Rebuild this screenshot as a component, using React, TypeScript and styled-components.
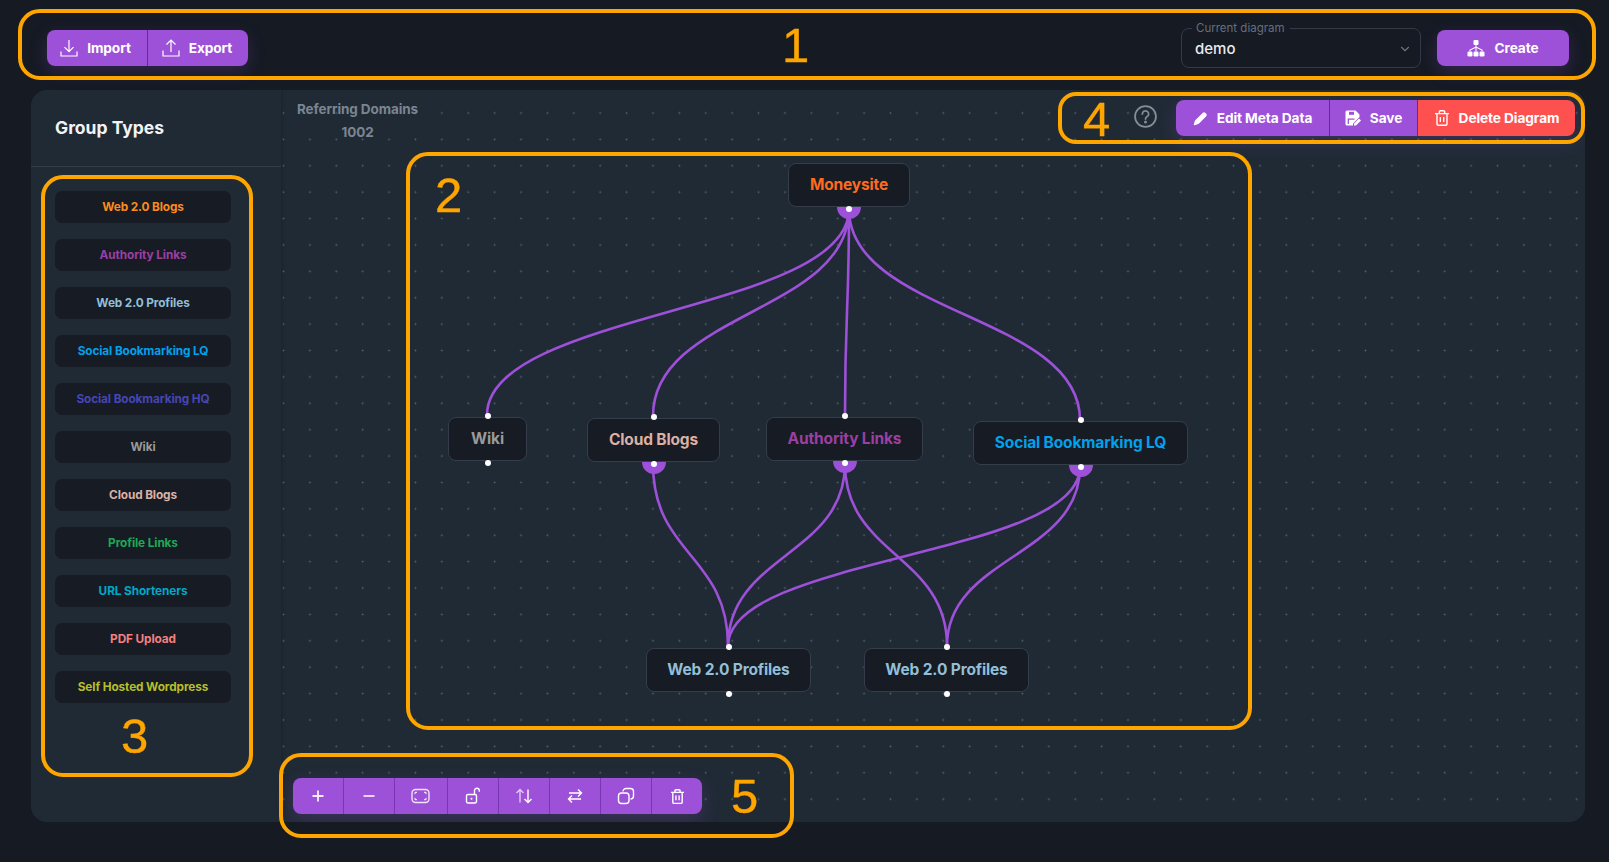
import React from 'react'
import styled, { createGlobalStyle } from 'styled-components'
import { ChevronDown } from 'lucide-react'

const PURPLE = '#9d50d8'
const CANVAS_X = 281
const CANVAS_Y = 90

const GlobalStyle = createGlobalStyle`
  html, body {
    margin: 0;
    padding: 0;
    background: #151a23;
    overflow: hidden;
  }
  * {
    box-sizing: border-box;
  }
`

const Page = styled.div`
  position: relative;
  width: 1609px;
  height: 862px;
  background: #151a23;
  font-family: Inter, "Noto Sans", sans-serif;
  overflow: hidden;
`

const Header = styled.header`
  display: flex;
  align-items: flex-start;
  height: 90px;
  padding: 21px 40px 0 47px;
`

const ButtonGroup = styled.div<{ $mt?: number }>`
  display: flex;
  height: 36px;
  margin-top: ${({ $mt }) => $mt ?? 0}px;
  border-radius: 8px;
  overflow: hidden;
  box-shadow: 0 6px 18px rgba(157, 80, 216, 0.22);
`

const GroupButton = styled.button<{ $w: number; $red?: boolean; $line?: string; $pr?: number }>`
  display: flex;
  align-items: center;
  justify-content: center;
  gap: 9px;
  width: ${({ $w }) => $w}px;
  height: 100%;
  padding: 0 ${({ $pr }) => $pr ?? 0}px 0 0;
  border: 0;
  border-right: 1px solid ${({ $line }) => $line ?? '#6c22ad'};
  background: ${({ $red }) => ($red ? '#ff5050' : PURPLE)};
  color: #fff;
  font-family: inherit;
  font-size: 13.7px;
  font-weight: 700;
  letter-spacing: -0.1px;

  &:last-child {
    border-right: 0;
  }
`

const Spacer = styled.div`
  flex: 1;
`

const SelectField = styled.fieldset`
  display: flex;
  align-items: center;
  justify-content: space-between;
  width: 240px;
  height: 47px;
  margin: 0 16px 0 0;
  padding: 0 8px 5px 13px;
  border: 1px solid #333b46;
  border-radius: 8px;
`

const SelectLabel = styled.legend`
  margin-left: -3px;
  padding: 0 5px 0 4px;
  color: #666f7b;
  font-size: 11.5px;
  font-weight: 400;
  line-height: 14px;
`

const SelectValue = styled.span`
  color: #e9ebee;
  font-size: 15px;
  font-weight: 500;
`

const Panel = styled.main`
  display: flex;
  width: 1554px;
  height: 732px;
  margin-left: 31px;
  background: #202a35;
  border-radius: 16px;
  overflow: hidden;
`

const Sidebar = styled.aside`
  position: relative;
  z-index: 1;
  width: 250px;
  flex-shrink: 0;
  background: #202a35;
  box-shadow: 1px 0 3px rgba(15, 20, 28, 0.35);
`

const SidebarTitle = styled.h2`
  display: flex;
  align-items: center;
  height: 77px;
  margin: 0;
  padding: 0 24px 1px;
  border-bottom: 1px solid #333d48;
  color: #f1f3f5;
  font-size: 17.5px;
  font-weight: 650;
`

const GroupList = styled.div`
  display: flex;
  flex-direction: column;
  gap: 16px;
  padding: 24px;
`

const GroupItem = styled.div<{ $color: string }>`
  display: flex;
  align-items: center;
  justify-content: center;
  width: 176px;
  height: 32px;
  background: #161b24;
  border-radius: 7px;
  color: ${({ $color }) => $color};
  font-size: 11.8px;
  font-weight: 700;
  letter-spacing: -0.1px;
`

const Canvas = styled.section`
  position: relative;
  flex: 1;
  background-color: #202a35;
  background-image: radial-gradient(circle at center, #57616c 0.8px, transparent 1.1px);
  background-size: 26.4px 26.4px;
  background-position: -10.7px 9.8px;
`

const Stats = styled.div`
  position: absolute;
  left: 16px;
  top: 11px;
  display: flex;
  flex-direction: column;
  align-items: center;
  gap: 6.5px;
  color: #7b8590;
  font-size: 13.5px;
  font-weight: 700;
  line-height: 16px;
  letter-spacing: -0.1px;
`

const HelpButton = styled.div`
  position: absolute;
  left: 853px;
  top: 15px;
  display: flex;
  color: #828d97;
`

const TopActions = styled.div`
  position: absolute;
  left: 895px;
  top: 10px;
  z-index: 2;
`

const BottomActions = styled.div`
  position: absolute;
  left: 12px;
  top: 688px;
  z-index: 2;
`

const EdgeLayer = styled.svg`
  position: absolute;
  left: 0;
  top: 0;
  width: 1269px;
  height: 732px;
`

const Node = styled.div<{ $x: number; $y: number; $w: number; $color: string }>`
  position: absolute;
  left: ${({ $x }) => $x - CANVAS_X}px;
  top: ${({ $y }) => $y - CANVAS_Y}px;
  width: ${({ $w }) => $w}px;
  height: 44px;
  display: flex;
  align-items: center;
  justify-content: center;
  padding-bottom: 1px;
  background: #161b24;
  border: 1.5px solid #343d49;
  border-radius: 8px;
  color: ${({ $color }) => $color};
  font-size: 15.5px;
  font-weight: 650;
  letter-spacing: -0.15px;
`

const Handle = styled.span<{ $side: 'top' | 'bottom' }>`
  position: absolute;
  left: 50%;
  ${({ $side }) => $side}: -5.5px;
  width: 6px;
  height: 6px;
  margin-left: -3px;
  background: #fff;
  border-radius: 50%;
  z-index: 2;
`

const Halo = styled.span`
  position: absolute;
  left: 50%;
  bottom: -13px;
  width: 24px;
  height: 12px;
  margin-left: -12px;
  background: ${PURPLE};
  border-radius: 0 0 12px 12px;
`

const AnnotationBox = styled.div<{ $x: number; $y: number; $w: number; $h: number; $r: number }>`
  position: absolute;
  left: ${({ $x }) => $x}px;
  top: ${({ $y }) => $y}px;
  width: ${({ $w }) => $w}px;
  height: ${({ $h }) => $h}px;
  border: 4.5px solid #ffa500;
  border-radius: ${({ $r }) => $r}px;
  pointer-events: none;
  z-index: 5;
`

const AnnotationNumber = styled.span<{ $x: number; $y: number }>`
  position: absolute;
  left: ${({ $x }) => $x}px;
  top: ${({ $y }) => $y}px;
  color: #ffa500;
  font-family: "Liberation Sans", Arial, sans-serif;
  font-size: 49px;
  line-height: 50px;
  -webkit-text-stroke: 0.4px #ffa500;
  pointer-events: none;
  z-index: 5;
`

function ImportIcon() {
  return (
    <svg width="18" height="18" viewBox="0 0 18 18" fill="none" stroke="#fff" strokeWidth="1.2">
      <path d="M1 12.5v4.5h16v-4.5M9 1v11.5M4.5 8.2 9 12.7l4.5-4.5" />
    </svg>
  )
}

function ExportIcon() {
  return (
    <svg width="18" height="18" viewBox="0 0 18 18" fill="none" stroke="#fff" strokeWidth="1.2">
      <path d="M1 11.5v5.5h16v-5.5M9 13V1M4.5 5.5 9 1l4.5 4.5" />
    </svg>
  )
}

function CreateIcon() {
  return (
    <svg width="18" height="17" viewBox="0 0 18 17" fill="#fff">
      <rect x="6.5" y="0" width="5" height="5" rx="1" />
      <rect x="0.5" y="11.5" width="5" height="5" rx="1.2" />
      <rect x="6.5" y="11.5" width="5" height="5" rx="1.2" />
      <rect x="12.5" y="11.5" width="5" height="5" rx="1.2" />
      <path d="M9 5v6.5M3 11.5V10l6-3 6 3v1.5" fill="none" stroke="#fff" strokeWidth="1.1" />
    </svg>
  )
}

function PencilIcon() {
  return (
    <svg width="15" height="15" viewBox="0 0 14 14" fill="#fff">
      <path d="M9.2 1.6a1.6 1.6 0 0 1 2.2 0l1 1a1.6 1.6 0 0 1 0 2.2L5.4 11.9c-.3.3-.6.4-1 .5l-3 .9c-.4.1-.8-.2-.7-.7l.9-3c.1-.4.2-.7.5-1z" />
    </svg>
  )
}

function SaveIcon() {
  return (
    <svg width="16" height="16" viewBox="0 0 16 16">
      <path
        d="M2 .5h8.6L14.5 4.4V7L8 13.5V15.5H2A1.5 1.5 0 0 1 .5 14V2A1.5 1.5 0 0 1 2 .5z"
        fill="#fff"
      />
      <rect x="4" y="1.8" width="5" height="3" fill={PURPLE} />
      <path d="M3.3 14V9.2h6.2" fill="none" stroke={PURPLE} strokeWidth="1.3" />
      <path d="M9 15.5v-2l5-5 2 2-5 5z" fill="#fff" />
    </svg>
  )
}

function TrashIcon({ size = 16, weight = 1.4 }: { size?: number; weight?: number }) {
  return (
    <svg width={size} height={size} viewBox="0 0 16 16" fill="none" stroke="#fff" strokeWidth={weight}>
      <path d="M1 3.6h14M3 3.6V14a1.3 1.3 0 0 0 1.3 1.3h7.4A1.3 1.3 0 0 0 13 14V3.6M5.3 3.6V1.8A1 1 0 0 1 6.3.8h3.4a1 1 0 0 1 1 1v1.8M6.3 7v5M9.7 7v5" />
    </svg>
  )
}

function HelpIcon() {
  return (
    <svg width="23" height="23" viewBox="0 0 22 22" fill="none" stroke="currentColor" strokeWidth="1.7">
      <circle cx="11" cy="11" r="10" />
      <path d="M8 8.6a3 3 0 1 1 4.6 2.5c-1 .6-1.6 1.1-1.6 2.3" strokeLinecap="round" />
      <circle cx="11" cy="16.3" r="0.6" fill="currentColor" />
    </svg>
  )
}

const Tool = ({ children }: { children: React.ReactNode }) => (
  <svg width="18" height="18" viewBox="0 0 18 18" fill="none" stroke="#fff" strokeWidth="1.4">
    {children}
  </svg>
)

const TOOLS: { w: number; icon: React.ReactNode }[] = [
  { w: 50.5, icon: <Tool><path d="M9 3.5v11M3.5 9h11" strokeWidth="1.8" opacity="0.9" /></Tool> },
  { w: 51, icon: <Tool><path d="M3.5 9h11" strokeWidth="1.8" opacity="0.75" /></Tool> },
  {
    w: 53,
    icon: (
      <svg width="19" height="16" viewBox="0 0 19 16" fill="none" stroke="#fff" strokeWidth="1.4">
        <rect x="1" y="1.5" width="17" height="13" rx="3.5" opacity="0.85" />
        <path d="M4 6.200V4.300h2M13 4.300h2v1.900M15 9.800v1.900h-2M6 11.700H4V9.800" strokeWidth="1" />
      </svg>
    ),
  },
  {
    w: 51,
    icon: (
      <Tool>
        <rect x="2.5" y="7.5" width="10" height="8.5" rx="1.4" />
        <path d="M10.5 7.2V3.6a2.4 2.4 0 0 1 4.8 0V4.8" />
        <circle cx="7.5" cy="11.7" r="1" fill="#fff" stroke="none" />
      </Tool>
    ),
  },
  {
    w: 51.5,
    icon: (
      <Tool>
        <path d="M5 15.5V2.5M1.5 6 5 2.5 8.5 6" opacity="0.7" />
        <path d="M13 2.5v13M9.5 12l3.5 3.5 3.5-3.5" />
      </Tool>
    ),
  },
  {
    w: 51,
    icon: (
      <Tool>
        <path d="M3 6h12.5M12 2.5 15.5 6 12 9.5" />
        <path d="M15 12H2.5M6 8.5 2.5 12 6 15.5" />
      </Tool>
    ),
  },
  {
    w: 51,
    icon: (
      <Tool>
        <rect x="1.5" y="6" width="10.5" height="10.5" rx="3" />
        <path d="M6 4.5a3 3 0 0 1 3-3h4.5a3 3 0 0 1 3 3V9a3 3 0 0 1-3 3" />
      </Tool>
    ),
  },
  { w: 50, icon: <TrashIcon size={15} weight={1.5} /> },
]

const GROUPS = [
  { label: 'Web 2.0 Blogs', color: '#fb8c1f' },
  { label: 'Authority Links', color: '#9b3fa3' },
  { label: 'Web 2.0 Profiles', color: '#92bfd6' },
  { label: 'Social Bookmarking LQ', color: '#03a0eb' },
  { label: 'Social Bookmarking HQ', color: '#4646b4' },
  { label: 'Wiki', color: '#9a9a9a' },
  { label: 'Cloud Blogs', color: '#dcb0a4' },
  { label: 'Profile Links', color: '#1fa855' },
  { label: 'URL Shorteners', color: '#00a8c8' },
  { label: 'PDF Upload', color: '#f47f7f' },
  { label: 'Self Hosted Wordpress', color: '#b5bf2a' },
]

const NODES = [
  { label: 'Moneysite', x: 788, y: 163, w: 122, color: '#ff6a1f', halo: true, hideTop: true },
  { label: 'Wiki', x: 448, y: 417, w: 79, color: '#9a9a9a' },
  { label: 'Cloud Blogs', x: 587, y: 418, w: 133, color: '#dcb0a4', halo: true },
  { label: 'Authority Links', x: 766, y: 417, w: 157, color: '#9b3fa3', halo: true },
  { label: 'Social Bookmarking LQ', x: 973, y: 421, w: 215, color: '#03a0eb', halo: true },
  { label: 'Web 2.0 Profiles', x: 646, y: 648, w: 165, color: '#92bfd6' },
  { label: 'Web 2.0 Profiles', x: 864, y: 648, w: 165, color: '#92bfd6' },
]

const EDGES = [
  [849, 209, 487, 415],
  [849, 209, 653, 416],
  [849, 209, 845, 415],
  [849, 209, 1080, 420],
  [653, 464, 728, 646],
  [845, 464, 728, 646],
  [845, 464, 947, 646],
  [1080, 467, 728, 646],
  [1080, 467, 947, 646],
]

const edgePath = ([x1, y1, x2, y2]: number[]) => {
  const midY = (y1 + y2) / 2
  return `M${x1},${y1} C${x1},${midY} ${x2},${midY} ${x2},${y2}`
}

export default function App() {
  return (
    <Page>
      <GlobalStyle />
      <Header>
        <ButtonGroup $mt={9}>
          <GroupButton $w={101} $pr={3}><ImportIcon />Import</GroupButton>
          <GroupButton $w={100} $pr={2}><ExportIcon />Export</GroupButton>
        </ButtonGroup>
        <Spacer />
        <SelectField>
          <SelectLabel>Current diagram</SelectLabel>
          <SelectValue>demo</SelectValue>
          <ChevronDown size={14} color="#6b7480" />
        </SelectField>
        <ButtonGroup $mt={9}>
          <GroupButton $w={132}><CreateIcon />Create</GroupButton>
        </ButtonGroup>
      </Header>

      <Panel>
        <Sidebar>
          <SidebarTitle>Group Types</SidebarTitle>
          <GroupList>
            {GROUPS.map((g) => (
              <GroupItem key={g.label} $color={g.color}>{g.label}</GroupItem>
            ))}
          </GroupList>
        </Sidebar>
        <Canvas>
          <Stats>
            <span>Referring Domains</span>
            <span>1002</span>
          </Stats>
          <HelpButton><HelpIcon /></HelpButton>
          <TopActions>
            <ButtonGroup>
              <GroupButton $w={154}><PencilIcon />Edit Meta Data</GroupButton>
              <GroupButton $w={88}><SaveIcon />Save</GroupButton>
              <GroupButton $w={157} $red><TrashIcon />Delete Diagram</GroupButton>
            </ButtonGroup>
          </TopActions>
          <EdgeLayer viewBox={`${CANVAS_X} ${CANVAS_Y} 1269 732`} fill="none" stroke={PURPLE} strokeWidth="2.6">
            {EDGES.map((e) => (
              <path key={e.join('-')} d={edgePath(e)} />
            ))}
          </EdgeLayer>
          {NODES.map((n) => (
            <Node key={n.x} $x={n.x} $y={n.y} $w={n.w} $color={n.color}>
              {n.label}
              {!n.hideTop && <Handle $side="top" />}
              {n.halo && <Halo />}
              <Handle $side="bottom" />
            </Node>
          ))}
          <BottomActions>
            <ButtonGroup>
              {TOOLS.map((t, i) => (
                <GroupButton key={i} $w={t.w} $line="#7a35b5">{t.icon}</GroupButton>
              ))}
            </ButtonGroup>
          </BottomActions>
        </Canvas>
      </Panel>

      <AnnotationBox $x={18} $y={9} $w={1578} $h={71} $r={22} />
      <AnnotationNumber $x={782} $y={20}>1</AnnotationNumber>
      <AnnotationBox $x={406} $y={152} $w={846} $h={578} $r={22} />
      <AnnotationNumber $x={435} $y={170}>2</AnnotationNumber>
      <AnnotationBox $x={41} $y={175} $w={212} $h={602} $r={22} />
      <AnnotationNumber $x={121} $y={711}>3</AnnotationNumber>
      <AnnotationBox $x={1058} $y={92} $w={527} $h={52} $r={18} />
      <AnnotationNumber $x={1083} $y={94}>4</AnnotationNumber>
      <AnnotationBox $x={279} $y={753} $w={515} $h={85} $r={22} />
      <AnnotationNumber $x={731} $y={771}>5</AnnotationNumber>
    </Page>
  )
}
